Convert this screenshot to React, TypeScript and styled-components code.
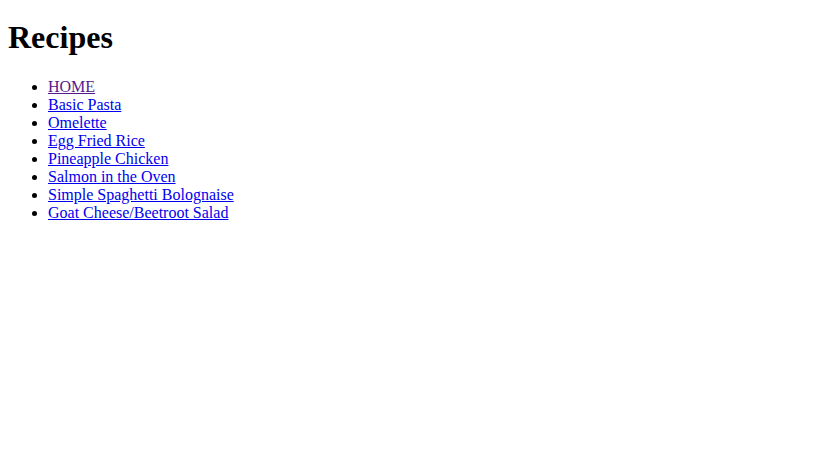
import React from "react";
import styled, { createGlobalStyle } from "styled-components";

const Global = createGlobalStyle`
  body {
    margin: 8px;
    font-family: "Liberation Serif", "Times New Roman", serif;
    font-size: 16px;
    color: #000;
    background: #fff;
  }
`;

const Title = styled.h1`
  font-size: 2em;
  font-weight: bold;
  margin: 11.44px 0 21.44px;
`;

const List = styled.ul`
  list-style: disc;
  margin: 1em 0;
  padding-left: 40px;
`;

const Item = styled.li`
  line-height: normal;
`;

const Link = styled.a<{ $visited?: boolean }>`
  color: ${(p) => (p.$visited ? "#551a8b" : "#0000ee")};
  text-decoration: underline;
`;

const recipes = [
  { name: "HOME", visited: true },
  { name: "Basic Pasta" },
  { name: "Omelette" },
  { name: "Egg Fried Rice" },
  { name: "Pineapple Chicken" },
  { name: "Salmon in the Oven" },
  { name: "Simple Spaghetti Bolognaise" },
  { name: "Goat Cheese/Beetroot Salad" },
];

export default function App() {
  return (
    <>
      <Global />
      <Title>Recipes</Title>
      <List>
        {recipes.map((r) => (
          <Item key={r.name}>
            <Link href="#" $visited={r.visited}>
              {r.name}
            </Link>
          </Item>
        ))}
      </List>
    </>
  );
}
